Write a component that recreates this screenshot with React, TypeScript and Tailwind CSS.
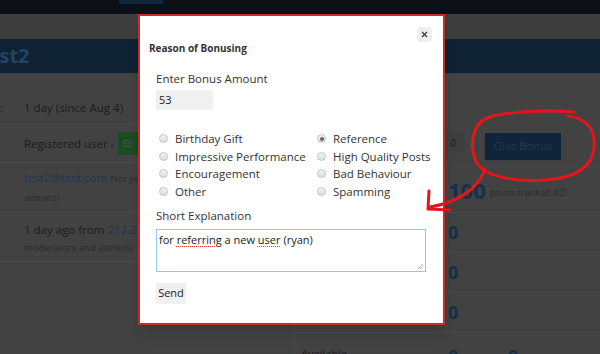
import React from 'react';
import { Mail, X } from 'lucide-react';

const reasonsLeft = ['Birthday Gift', 'Impressive Performance', 'Encouragement', 'Other'];
const reasonsRight = ['Reference', 'High Quality Posts', 'Bad Behaviour', 'Spamming'];

const Radio = ({ label, checked }: { label: string; checked?: boolean }) => (
  <label className="flex items-center gap-[7px] h-[17.5px] text-[11.5px] text-[#333]">
    <span className="w-[9px] h-[9px] rounded-full border border-[#c4c4c4] bg-gradient-to-b from-[#f4f4f4] to-[#dcdcdc] flex items-center justify-center">
      {checked && <span className="w-[4px] h-[4px] rounded-full bg-[#666]" />}
    </span>
    {label}
  </label>
);

const BonusModal = () => (
  <div className="absolute left-[138px] top-[14px] w-[307px] h-[311px] bg-white border-2 border-[#c62b2b] shadow-lg">
    <button className="absolute right-[11px] top-[11px] w-[15px] h-[15px] bg-[#eeeeee] flex items-center justify-center rounded-sm">
      <X className="w-[9px] h-[9px] text-[#333]" strokeWidth={3} />
    </button>
    <div className="pl-[9px] pt-[25px] text-[10px] font-bold text-[#333]">Reason of Bonusing</div>

    <div className="pl-[16px] pt-[15px]">
      <div className="text-[11.5px] text-[#333] leading-[16px]">Enter Bonus Amount</div>
      <div className="mt-[3px] w-[57px] h-[20px] bg-[#f0f0f0] text-[11px] text-[#222] pl-[3px] flex items-center">53</div>

      <div className="mt-[20px] flex">
        <div className="w-[161px] pl-[3px]">
          {reasonsLeft.map((r) => (
            <Radio key={r} label={r} />
          ))}
        </div>
        <div>
          {reasonsRight.map((r) => (
            <Radio key={r} label={r} checked={r === 'Reference'} />
          ))}
        </div>
      </div>

      <div className="mt-[8px] text-[11.5px] text-[#333] leading-[16px]">Short Explanation</div>
      <div className="relative mt-[5px] w-[270px] h-[43px] border border-[#9cc4e4] text-[11px] text-[#222] px-[2px] pt-[2px]">
        for <span className="underline decoration-dotted decoration-[#e04040] decoration-1 underline-offset-2">referring</span> a new{' '}
        <span className="underline decoration-dotted decoration-[#e04040] decoration-1 underline-offset-2">user</span> (ryan)
        <svg className="absolute right-[1px] bottom-[1px]" width="7" height="7" viewBox="0 0 7 7">
          <path d="M6 1 L1 6 M6 3.5 L3.5 6" stroke="#999" strokeWidth="0.8" />
        </svg>
      </div>
      <button className="mt-[11px] w-[30px] h-[21px] bg-[#f0f0f0] text-[11px] text-[#222] flex items-center justify-center">Send</button>
    </div>
  </div>
);

const Annotation = () => (
  <svg className="absolute left-0 top-0 pointer-events-none" width="600" height="354" viewBox="0 0 600 354">
    <path
      d="M574 112 C 545 110, 505 111, 487 118 C 473 124, 468 145, 477 163 C 486 178, 520 182, 545 180 C 575 178, 592 168, 594 148 C 596 128, 585 118, 568 116"
      fill="none"
      stroke="#e3161b"
      strokeWidth="3"
      strokeLinecap="round"
    />
    <path d="M485 169 C 478 190, 455 203, 430 207" fill="none" stroke="#e3161b" strokeWidth="3" strokeLinecap="round" />
    <path d="M429 191 L 428 209 L 450 210" fill="none" stroke="#e3161b" strokeWidth="3" strokeLinecap="round" strokeLinejoin="round" />
  </svg>
);

const LeftRow = ({ children, className = '' }: { children: React.ReactNode; className?: string }) => (
  <div className={`border-b border-[#4a4a4a] pl-[24px] overflow-hidden whitespace-nowrap ${className}`}>{children}</div>
);

const StatRow = ({ children, className = '' }: { children: React.ReactNode; className?: string }) => (
  <div className={`border-b border-[#4a4a4a] pl-[154px] ${className}`}>{children}</div>
);

export default function App() {
  return (
    <div className="relative w-[600px] h-[354px] overflow-hidden bg-[#424242]" style={{ fontFamily: '"Open Sans", "DejaVu Sans", sans-serif' }}>
      {/* top nav */}
      <div className="h-[14px] bg-[#0a1016] flex">
        <div className="ml-[119px] w-[44px] h-[4px] bg-[#10283d]" />
      </div>
      {/* grey band */}
      <div className="h-[25px] bg-[#3d3d3d]" />
      {/* title band */}
      <div className="h-[34px] bg-[#0f2233] flex items-center overflow-hidden">
        <span className="-ml-[21px] text-[20px] font-bold text-[#244461]">test2</span>
      </div>

      {/* content */}
      <div className="flex">
        <div className="w-[293px] text-[11.5px] text-[#1b1b1b]">
          <LeftRow className="h-[52px] pt-[26px] leading-[17px] relative">
            <span className="absolute left-0 top-[26px]">:</span>
            <span>1 day (since Aug 4)</span>
          </LeftRow>
          <LeftRow className="h-[38px] flex items-center gap-[4px]">
            <span>Registered user -</span>
            <span className="w-[34px] h-[23px] bg-[#1c4a22] flex items-center pl-[5px]">
              <Mail className="w-[9px] h-[9px] text-[#555]" />
            </span>
          </LeftRow>
          <LeftRow className="h-[50px] pt-[6px]">
            <div className="leading-[18px]">
              <span className="text-[#1d3550]">test2@test.com</span>{' '}
              <span className="text-[9.5px] text-[#2a2a2a]">Not yet verified (visible to moderators and</span>
            </div>
            <div className="text-[9.5px] text-[#2a2a2a] leading-[20px]">admins)</div>
          </LeftRow>
          <LeftRow className="h-[49px] pt-[8px]">
            <div className="leading-[18px]">
              1 day ago from <span className="text-[#1d3550]">212.25.1.1</span>
            </div>
            <div className="text-[9.5px] text-[#2a2a2a] leading-[17px]">moderators and admins)</div>
          </LeftRow>
        </div>

        <div className="flex-1 border-l border-[#4a4a4a]">
          <div className="h-[94px] flex items-start justify-end pr-[39px] gap-[20px] pt-[60px] border-b border-[#444]">
            <div className="w-[60px] h-[20px] bg-[#3f3f3f] text-[10px] text-[#1b1b1b] flex items-center justify-end pr-[9px]">0</div>
            <div className="w-[76px] h-[27px] bg-[#10253a] text-[11px] text-[#243a50] flex items-center justify-center">Give Bonus</div>
          </div>
          <StatRow className="h-[46px] flex items-center gap-[4px]">
            <span className="text-[22px] font-bold text-[#15304a] leading-[24px]">100</span>
            <span className="text-[9px] text-[#2a2a2a] pt-[6px]">points (ranked #2)</span>
          </StatRow>
          <StatRow className="h-[40px] flex items-center">
            <span className="text-[18px] font-bold text-[#15304a]">0</span>
          </StatRow>
          <StatRow className="h-[40px] flex items-center">
            <span className="text-[18px] font-bold text-[#15304a]">0</span>
          </StatRow>
          <StatRow className="h-[40px] flex items-center">
            <span className="text-[18px] font-bold text-[#15304a]">0</span>
          </StatRow>
          <div className="flex items-start pl-[7px] pt-[13px] text-[11px] text-[#1b1b1b]">
            <span className="w-[147px]">Available</span>
            <span className="w-[60px] text-[18px] font-bold text-[#15304a] leading-[20px]">0</span>
            <span className="text-[18px] font-bold text-[#15304a] leading-[20px]">0</span>
          </div>
        </div>
      </div>

      <BonusModal />
      <Annotation />
    </div>
  );
}
